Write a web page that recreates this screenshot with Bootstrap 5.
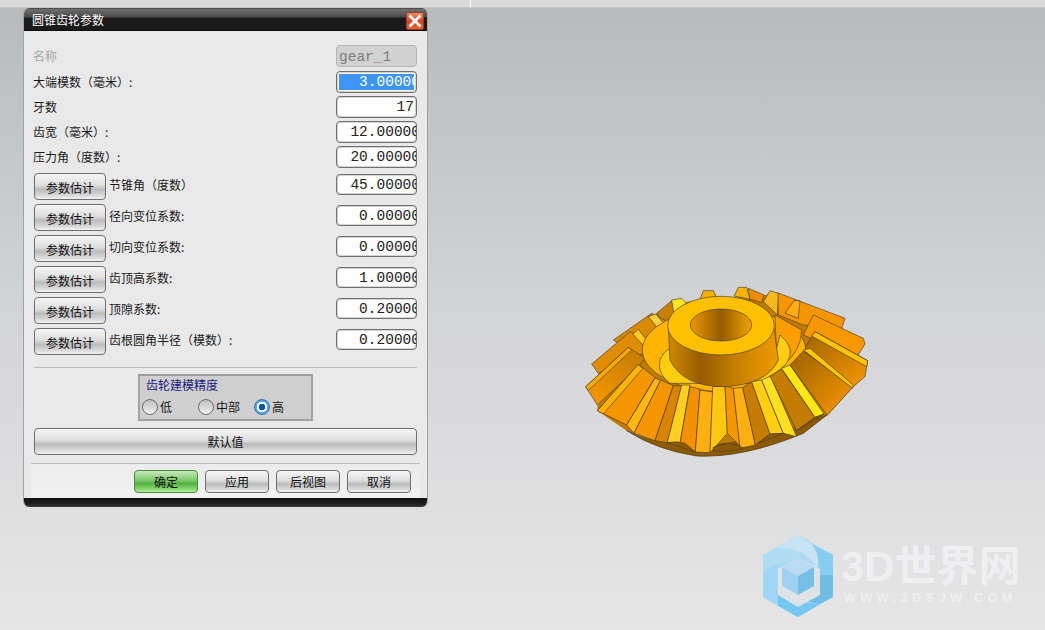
<!DOCTYPE html>
<html lang="zh-CN">
<head>
  <meta charset="UTF-8" />
  <meta name="viewport" content="width=device-width, initial-scale=1.0">
  <title>圆锥齿轮参数</title>
  <link href="https://cdn.jsdelivr.net/npm/bootstrap@5.3.2/dist/css/bootstrap.min.css" rel="stylesheet">
  <style>
    :root {
      --ui-font: "Noto Sans CJK SC", "Liberation Sans", sans-serif;
    }
    html, body {
      height: 630px;
      overflow: hidden;
    }
    body {
      font-family: var(--ui-font);
      font-size: 12px;
      color: #1a1a1a;
      background: linear-gradient(180deg, #b9babc 8px, #d2d3d5 300px, #e6e6e7 630px);
    }
    .top-strip {
      height: 8px;
      background: #dadada;
      border-bottom: 1px solid #c4c4c4;
    }
    .top-strip-line {
      width: 1px;
      height: 8px;
      margin-left: 470px;
      background: #f6f6f6;
    }
    .viewport-item {
      position: absolute;
    }
    .gear-view {
      left: 570px;
      top: 270px;
      width: 310px;
      height: 200px;
    }
    .wm-logo {
      left: 750px;
      top: 525px;
      width: 90px;
      height: 105px;
    }
    .wm-title {
      left: 841px;
      top: 539px;
      font-family: "Liberation Sans", "Noto Sans CJK SC", sans-serif;
      font-size: 42px;
      font-weight: 700;
      line-height: 56px;
      color: #eff0f2;
      white-space: nowrap;
    }
    .wm-url {
      left: 844px;
      top: 591px;
      font-family: "Liberation Sans", sans-serif;
      font-size: 12.5px;
      font-weight: 700;
      letter-spacing: 4.6px;
      line-height: 14px;
      color: #eff0f2;
      white-space: nowrap;
    }
    .dlg {
      left: 23px;
      top: 8px;
      width: 405px;
      height: 499px;
      border-radius: 6px;
      overflow: hidden;
      background: #e9e9e9;
      border-left: 1px solid #a2a2a2;
      border-right: 1px solid #a2a2a2;
    }
    .dlg-title {
      height: 23px;
      padding: 0 3px 0 8px;
      background: linear-gradient(180deg, #2a2a2a 0, #6e6e6e 1px, #4a4a4a 9px, #1a1a1a 10px, #1a1a1a 22px, #000 23px);
      color: #fff;
      font-size: 12px;
    }
    .dlg-close {
      width: 18px;
      height: 18px;
      border-radius: 2px;
      margin-top: 2px;
      background: linear-gradient(180deg, #ee8a66, #d9431c 55%, #e4603a);
      border: 1px solid #9c3a20;
    }
    .dlg-body {
      padding: 14px 10px 0 10px;
    }
    .param-row {
      height: 22px;
      margin-bottom: 3px;
    }
    .param-row-name {
      margin-bottom: 4px;
    }
    .param-row-est {
      height: 27px;
      margin-bottom: 4px;
    }
    .param-first {
      margin-top: 5px;
    }
    .param-label {
      flex: 1 1 auto;
      line-height: 22px;
      height: 22px;
      margin-left: -1px;
    }
    .est-label {
      margin-left: 0;
      padding-left: 3px;
      margin-top: 1px;
    }
    .param-muted {
      color: #a8a8a8;
    }
    .param-field {
      flex: 0 0 81px;
      width: 81px;
      height: 22px;
      padding: 2px;
      border: 1px solid #707070;
      box-shadow: inset 0 0 0 1px #d4d4d4;
      border-radius: 4px;
      background: #fff;
      overflow: hidden;
      justify-content: flex-end;
      font-family: "Liberation Mono", monospace;
      font-size: 14.5px;
      line-height: 16px;
      color: #222;
      white-space: nowrap;
    }
    .param-field > span {
      margin-right: -6px;
    }
    .param-field > span.fits {
      margin-right: 0;
    }
    .est-field {
      margin-top: 1px;
      height: 21px;
    }
    .field-disabled {
      justify-content: flex-start;
      padding-top: 3px;
      background: #d2d2d2;
      border-color: #b4b4b4;
      box-shadow: none;
      color: #7d7d7d;
    }
    .field-disabled > span {
      margin: 0;
    }
    .field-selected > div {
      flex: 1 1 auto;
      display: flex;
      justify-content: flex-end;
      background: #3d95f8;
      color: #fff;
      overflow: hidden;
    }
    .field-selected span {
      margin-right: -6px;
    }
    .est-btn, .wide-btn, .foot-btn {
      --bs-btn-padding-x: 0;
      --bs-btn-padding-y: 0;
      --bs-btn-font-size: 12px;
      --bs-btn-color: #111;
      --bs-btn-hover-color: #111;
      --bs-btn-active-color: #111;
      --bs-btn-border-radius: 4px;
      --bs-btn-border-color: #6f6f6f;
      --bs-btn-hover-border-color: #6f6f6f;
      --bs-btn-active-border-color: #6f6f6f;
      background: linear-gradient(180deg, #f6f6f6 0, #dedede 45%, #bcbcbc 62%, #d8d8d8 85%, #f2f2f2 100%);
      font-family: var(--ui-font);
    }
    .est-btn {
      flex: 0 0 72px;
      width: 72px;
      height: 27px;
      padding-top: 3px;
    }
    .dlg-sep {
      height: 1px;
      background: #bdbdbd;
      border-bottom: 0;
    }
    .sep-one {
      margin: 12px 0 6px 0;
    }
    .prec-box {
      width: 175px;
      height: 47px;
      margin: 0 auto 7px 104px;
      padding: 0 2px;
      background: #cfcfcf;
      border: 2px solid #a2a2a2;
      border-top-color: #9c9c9c;
    }
    .prec-title {
      color: #1c1a80;
      padding-left: 4px;
      line-height: 18px;
      margin-bottom: 4px;
    }
    .prec-opt {
      width: 56px;
      line-height: 18px;
    }
    .prec-opt-last {
      width: auto;
    }
    .prec-radio {
      width: 16px;
      height: 16px;
      margin: 0 2px 0 0;
      flex: 0 0 16px;
      border: 1px solid #6d6d6d;
      background: linear-gradient(180deg, #bdbdbd, #f2f2f2);
    }
    .prec-radio:checked {
      border-color: #3a6ea8;
      background: radial-gradient(circle, #0b56a8 0 3px, #f4f8fc 3.5px 5px, #58a9ea 5.5px);
    }
    .wide-btn {
      display: block;
      width: 383px;
      height: 27px;
    }
    .dlg-foot {
      margin: 8px -3px 0 -3px;
    }
    .foot-sep {
      margin: 0;
    }
    .foot-row {
      padding: 6px 9px 0 0;
      height: 35px;
      gap: 7px;
      background: linear-gradient(180deg, #ececec, #f1f1f1);
    }
    .foot-btn {
      width: 64px;
      height: 23px;
    }
    .foot-ok {
      --bs-btn-border-color: #4c8a3c;
      --bs-btn-hover-border-color: #4c8a3c;
      background: linear-gradient(180deg, #c9e8bf 0, #7cc96a 45%, #55b040 60%, #8fe07a 90%, #b5f0a0 100%);
    }
    .dlg-bottom {
      position: absolute;
      left: -1px;
      right: -1px;
      bottom: 0;
      height: 9px;
      background: linear-gradient(180deg, #111 0, #222 6px, #3a3a3a 9px);
    }
  </style>
</head>
<body>

  <div class="top-strip"><div class="top-strip-line"></div></div>

  <!-- 3D view: gear -->
  <svg class="viewport-item gear-view" viewBox="0 0 930 600" stroke="#4a4030" stroke-width="2" stroke-linejoin="round">
    <defs>
      <linearGradient id="hubSide" x1="0" x2="1" y1="0" y2="0">
        <stop offset="0" stop-color="#d08a00"/>
        <stop offset=".3" stop-color="#985c00"/>
        <stop offset=".65" stop-color="#c98200"/>
        <stop offset="1" stop-color="#f09a00"/>
      </linearGradient>
      <linearGradient id="holeGrad" x1="0" x2="1" y1="0" y2="0">
        <stop offset="0" stop-color="#e89a00"/>
        <stop offset=".5" stop-color="#965a00"/>
        <stop offset="1" stop-color="#f0a400"/>
      </linearGradient>
      <linearGradient id="toothGrad" x1="0" x2="1" y1="0" y2="1">
        <stop offset="0" stop-color="#9c6200"/>
        <stop offset="1" stop-color="#f89800"/>
      </linearGradient>
      <linearGradient id="toothGradL" x1="1" x2="0" y1="0" y2="1">
        <stop offset="0" stop-color="#c07a00"/>
        <stop offset="1" stop-color="#fa9a00"/>
      </linearGradient>
    </defs>
    <!-- solid base behind the teeth -->
    <path d="M85 310 L150 222 L260 130 L350 95 L620 72 L700 150 L860 262 L850 350 L772 436 L700 490 Q520 565 380 558 L170 482 L82 422 Z" fill="#c07a00" stroke="none"/>
    <!-- back teeth -->
    <path d="M390 88 L400 62 L430 62 L440 82 Z" fill="#f5b000"/>
    <path d="M492 78 L505 52 L530 52 L540 88 Z" fill="#f6b400"/>
    <path d="M535 55 L582 75 L575 98 L540 88 Z" fill="#ee8c00"/>
    <path d="M622 68 L825 145 L815 175 L700 165 L625 135 Z" fill="#f59500"/>
    <path d="M580 95 L600 62 L625 70 L622 135 Z" fill="#f7b81c"/>
    <path d="M690 92 L672 92 L645 130 L685 145 Z" fill="#ffad10"/>
    <path d="M730 135 L880 205 L885 222 L860 262 L700 195 Z" fill="#f79800"/>
    <path d="M735 185 L893 272 L885 320 L850 350 L700 240 Z" fill="url(#toothGrad)"/>
    <path d="M735 185 L893 272 L890 290 L725 198 Z" fill="#ffc400"/>
    <path d="M260 130 L305 92 L330 130 L290 170 Z" fill="#c98000"/>
    <path d="M305 90 L335 85 L350 100 L312 132 Z" fill="#ffe820"/>
    <path d="M130 210 L245 130 L300 158 L240 215 L150 222 Z" fill="#d98a00"/>
    <path d="M235 140 L258 132 L295 178 L268 180 Z" fill="#ffd040"/>
    <path d="M65 282 L180 185 L240 212 L220 250 L85 310 Z" fill="#e08c00"/>
    <path d="M188 192 L205 178 L242 225 L225 232 Z" fill="#ffc820"/>
    <path d="M47 350 L175 232 L225 265 L205 290 L82 405 Z" fill="url(#toothGradL)"/>
    <path d="M47 350 L175 232 L185 240 L55 362 Z" fill="#f9a800"/>
    <!-- bottom rim -->
    <path d="M170 482 Q400 590 770 435 L700 490 Q520 565 380 558 Q260 540 170 482 Z" fill="#8c5a00"/>
    <!-- inner ring -->
    <ellipse cx="462" cy="240" rx="245" ry="125" fill="#ffb400"/>
    <path d="M615 135 L695 180 Q695 240 640 285 L620 270 Z" fill="#fb9c00"/>
    <path d="M630 195 Q680 235 650 280 Q610 320 560 340 L300 340 Q260 310 270 270 Q280 245 300 235 L620 235 Z" fill="#ffcd10"/>
    <!-- front teeth -->
    <path d="M205 283 L255 322 L170 465 L82 422 Z" fill="#f59500"/>
    <path d="M205 283 L218 296 L100 432 L82 422 Z" fill="#ffb400"/>
    <path d="M255 325 L272 330 L192 490 L170 465 Z" fill="#ffb810"/>
    <path d="M272 330 L310 347 L255 512 L192 490 Z" fill="#f59500"/>
    <path d="M310 347 L335 347 L292 518 L255 512 Z" fill="#d98400"/>
    <path d="M335 345 L360 345 L330 520 L292 518 Z" fill="#ffd020"/>
    <path d="M360 350 L390 357 L376 546 L330 520 Z" fill="#f59000"/>
    <path d="M390 360 L428 366 L420 548 L376 546 Z" fill="#ffb010"/>
    <path d="M428 350 L465 348 L472 490 L420 548 Z" fill="#ffc810"/>
    <path d="M465 348 L490 355 L510 528 L472 490 Z" fill="#f59500"/>
    <path d="M490 355 L518 352 L556 525 L510 535 Z" fill="#ffb010"/>
    <path d="M518 352 L545 335 L600 492 L556 525 Z" fill="#c67c00"/>
    <path d="M545 335 L575 330 L640 490 L600 492 Z" fill="#ffcf10"/>
    <path d="M575 330 L602 318 L680 500 L640 490 Z" fill="#ffe020"/>
    <path d="M600 318 L635 298 L735 442 L680 482 Z" fill="#c27c00"/>
    <path d="M635 295 L660 285 L762 432 L735 442 Z" fill="#ffe614"/>
    <path d="M660 285 L700 243 L848 352 L772 436 Z" fill="url(#toothGrad)"/>
    <path d="M700 240 L720 235 L850 345 L848 355 Z" fill="#ffc800"/>
    <!-- tooth ends -->
    <path d="M292 518 Q320 512 345 520 L376 546 Z" fill="#8c5a00"/>
    <path d="M430 532 L472 520 L510 528 L520 536 Q470 548 430 542 Z" fill="#8c5a00"/>
    <path d="M565 520 L600 492 L640 490 Z" fill="#8c5a00"/>
    <path d="M680 482 L735 442 L762 432 Z" fill="#8c5a00"/>
    <!-- hub -->
    <path d="M295 175 L300 270 Q340 350 460 350 Q590 345 625 270 L612 175 Z" fill="url(#hubSide)"/>
    <ellipse cx="453" cy="167" rx="160" ry="88" fill="#ffc000"/>
    <ellipse cx="453" cy="165" rx="92" ry="48" fill="url(#holeGrad)"/>
  </svg>

  <!-- watermark -->
  <svg class="viewport-item wm-logo" viewBox="0 0 90 105">
    <path d="M48 10 L83 30 L83 72 L48 92 L13 72 L13 30 Z" fill="#a9d8f2"/>
    <path d="M48 10 L62 19 Q72 34 66 42 Q56 24 26 23 Z" fill="#c7e4f4"/>
    <path d="M62 19 L83 30 L83 50 L68 53 Q72 34 62 19 Z" fill="#87cdf0"/>
    <path d="M83 50 L83 72 L70 79 L50 75 Q68 70 70 50 Z" fill="#70bde6"/>
    <path d="M70 79 L48 92 L28 81 L28 64 Q42 78 70 79 Z" fill="#74c8f2"/>
    <path d="M28 81 L13 72 L13 48 L28 38 Q26 62 28 81 Z" fill="#9fd6f3"/>
    <path d="M13 48 L13 30 L26 23 Q44 22 56 30 L30 38 Q18 40 13 48 Z" fill="#b2dcf3"/>
    <path d="M48 32 L70 44 L70 70 L48 82 L28 70 L28 44 Z" fill="#dfe3e6"/>
    <path d="M48 32 L64 42 L48 51 L32 42 Z" fill="#b9dcf2"/>
    <path d="M32 42 L48 51 L48 70 L32 61 Z" fill="#9fd2f2"/>
    <path d="M64 42 L48 51 L48 70 L64 61 Z" fill="#76bfe9"/>
  </svg>
  <div class="viewport-item wm-title">3D世界网</div>
  <div class="viewport-item wm-url">WWW.3DSJW.COM</div>

  <!-- Dialog -->
  <div class="viewport-item dlg">
    <div class="dlg-title d-flex justify-content-between align-items-center">
      <span>圆锥齿轮参数</span>
      <div class="dlg-close d-flex align-items-center justify-content-center">
        <svg width="14" height="14" viewBox="0 0 14 14"><path d="M1.5 1.5 L12.5 12.5 M12.5 1.5 L1.5 12.5" stroke="#fff" stroke-width="2.8"/></svg>
      </div>
    </div>

    <div class="dlg-body">
      <div class="param-row param-row-name d-flex">
        <div class="param-label param-muted">名称</div>
        <div class="param-field field-disabled d-flex"><span>gear_1</span></div>
      </div>
      <div class="param-row d-flex">
        <div class="param-label">大端模数（毫米）:</div>
        <div class="param-field field-selected d-flex"><div><span>3.00000</span></div></div>
      </div>
      <div class="param-row d-flex">
        <div class="param-label">牙数</div>
        <div class="param-field d-flex"><span class="fits">17</span></div>
      </div>
      <div class="param-row d-flex">
        <div class="param-label">齿宽（毫米）:</div>
        <div class="param-field d-flex"><span>12.00000</span></div>
      </div>
      <div class="param-row d-flex">
        <div class="param-label">压力角（度数）:</div>
        <div class="param-field d-flex"><span>20.00000</span></div>
      </div>

      <div class="param-row-est param-first d-flex">
        <button class="btn est-btn" type="button">参数估计</button>
        <div class="param-label est-label">节锥角（度数）</div>
        <div class="param-field est-field d-flex"><span>45.00000</span></div>
      </div>
      <div class="param-row-est d-flex">
        <button class="btn est-btn" type="button">参数估计</button>
        <div class="param-label est-label">径向变位系数:</div>
        <div class="param-field est-field d-flex"><span>0.00000</span></div>
      </div>
      <div class="param-row-est d-flex">
        <button class="btn est-btn" type="button">参数估计</button>
        <div class="param-label est-label">切向变位系数:</div>
        <div class="param-field est-field d-flex"><span>0.00000</span></div>
      </div>
      <div class="param-row-est d-flex">
        <button class="btn est-btn" type="button">参数估计</button>
        <div class="param-label est-label">齿顶高系数:</div>
        <div class="param-field est-field d-flex"><span>1.00000</span></div>
      </div>
      <div class="param-row-est d-flex">
        <button class="btn est-btn" type="button">参数估计</button>
        <div class="param-label est-label">顶隙系数:</div>
        <div class="param-field est-field d-flex"><span>0.20000</span></div>
      </div>
      <div class="param-row-est d-flex">
        <button class="btn est-btn" type="button">参数估计</button>
        <div class="param-label est-label">齿根圆角半径（模数）:</div>
        <div class="param-field est-field d-flex"><span>0.20000</span></div>
      </div>

      <div class="dlg-sep sep-one"></div>

      <div class="prec-box">
        <div class="prec-title">齿轮建模精度</div>
        <div class="d-flex align-items-center">
          <label class="prec-opt d-flex align-items-center"><input class="form-check-input prec-radio" type="radio" name="prec">低</label>
          <label class="prec-opt d-flex align-items-center"><input class="form-check-input prec-radio" type="radio" name="prec">中部</label>
          <label class="prec-opt prec-opt-last d-flex align-items-center"><input class="form-check-input prec-radio" type="radio" name="prec" checked>高</label>
        </div>
      </div>

      <button class="btn wide-btn" type="button">默认值</button>

      <div class="dlg-foot">
        <div class="dlg-sep foot-sep"></div>
        <div class="foot-row d-flex justify-content-end">
          <button class="btn foot-btn foot-ok" type="button">确定</button>
          <button class="btn foot-btn" type="button">应用</button>
          <button class="btn foot-btn" type="button">后视图</button>
          <button class="btn foot-btn" type="button">取消</button>
        </div>
      </div>
    </div>

    <div class="dlg-bottom"></div>
  </div>

  <script src="https://cdn.jsdelivr.net/npm/bootstrap@5.3.2/dist/js/bootstrap.bundle.min.js"></script>
</body>
</html>
